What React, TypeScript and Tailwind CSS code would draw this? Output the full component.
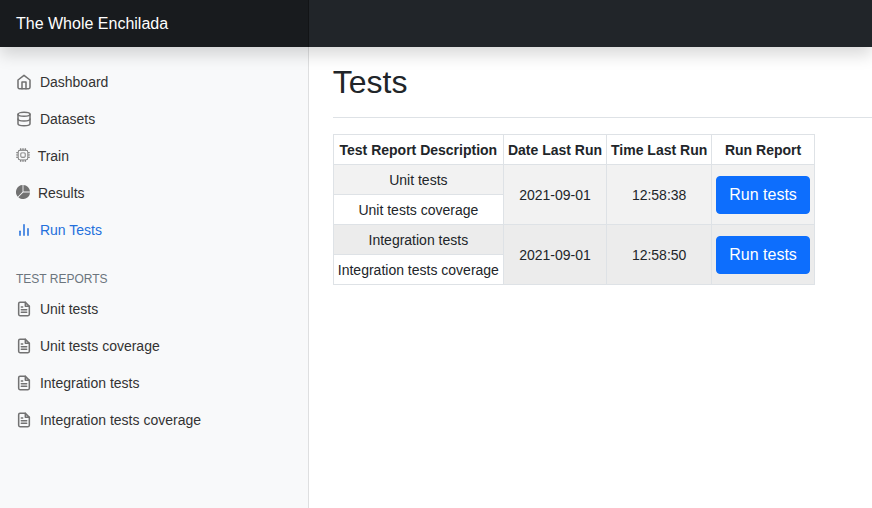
import type { ReactNode } from "react";
import { FiBarChart2, FiDatabase, FiFileText, FiHome } from "react-icons/fi";
import { BsCpu, BsPieChartFill } from "react-icons/bs";

type NavEntry = { label: string; icon: ReactNode; active?: boolean };

const feather = "mr-1 inline-block h-4 w-4 stroke-[2.3] align-text-bottom";
const glyph = "mr-1 inline-block h-[14px] w-[14px] align-[-0.75px]";

const mainLinks: NavEntry[] = [
  { label: "Dashboard", icon: <FiHome className={feather} /> },
  { label: "Datasets", icon: <FiDatabase className={feather} /> },
  { label: "Train", icon: <BsCpu className={glyph} /> },
  { label: "Results", icon: <BsPieChartFill className={glyph} /> },
  { label: "Run Tests", icon: <FiBarChart2 className={feather} />, active: true },
];

const reportLinks: NavEntry[] = [
  "Unit tests",
  "Unit tests coverage",
  "Integration tests",
  "Integration tests coverage",
].map((label) => ({ label, icon: <FiFileText className={feather} /> }));

const reports = [
  { name: "Unit tests", date: "2021-09-01", time: "12:58:38", bg: "bg-[#f2f2f2]" },
  { name: "Integration tests", date: "2021-09-01", time: "12:58:50", bg: "bg-[#ececec]" },
];

const cell = "border border-[#dee2e6] px-1 pt-[5px] pb-[3px]";

function NavList({ items }: { items: NavEntry[] }) {
  return (
    <ul>
      {items.map((item) => (
        <li key={item.label}>
          <a
            className={`block h-[37px] px-4 py-2 font-medium ${
              item.active ? "text-[#2470dc]" : "text-[#333]"
            }`}
          >
            <span className={item.active ? "" : "text-[#727272]"}>{item.icon}</span>{" "}
            {item.label}
          </a>
        </li>
      ))}
    </ul>
  );
}

export default function App() {
  return (
    <div className="flex h-[508px] w-full flex-col overflow-hidden bg-white font-['Liberation_Sans',Arial,sans-serif] text-[14px] leading-[21px] text-[#212529]">
      <header className="z-10 flex h-[47px] shrink-0 bg-[#212529] shadow-[0_8px_16px_rgba(0,0,0,0.15)]">
        <div className="w-[309px] bg-black/25 px-4 pt-3 text-base leading-6 text-white shadow-[inset_-1px_0_0_rgba(0,0,0,0.25)]">
          The Whole Enchilada
        </div>
      </header>
      <div className="flex min-h-0 grow">
        <nav className="w-[309px] shrink-0 bg-[#f8f9fa] pt-[17px] shadow-[inset_-1px_0_0_rgba(0,0,0,0.1)]">
          <NavList items={mainLinks} />
          <h6 className="mt-[23px] mb-[5px] px-4 text-[12px] leading-[14.4px] text-[#6c757d] uppercase">
            Test reports
          </h6>
          <NavList items={reportLinks} />
        </nav>
        <main className="min-w-0 grow pl-[23.8px]">
          <div className="mb-4 border-b border-[#dee2e6] pt-4 pb-2">
            <h1 className="mb-2 text-[32px] leading-[38.4px] font-medium">Tests</h1>
          </div>
          <table className="border-collapse text-center align-middle whitespace-nowrap">
            <thead>
              <tr>
                <th className={cell}>Test Report Description</th>
                <th className={cell}>Date Last Run</th>
                <th className={cell}>Time Last Run</th>
                <th className={cell}>Run Report</th>
              </tr>
            </thead>
            {reports.map((r) => (
              <tbody key={r.name}>
                <tr className={r.bg}>
                  <td className={cell}>{r.name}</td>
                  <td className={cell} rowSpan={2}>{r.date}</td>
                  <td className={cell} rowSpan={2}>{r.time}</td>
                  <td className="border border-[#dee2e6] p-1" rowSpan={2}>
                    <button className="block rounded-[4px] border border-[#0d6efd] bg-[#0d6efd] px-3 py-1.5 text-base leading-6 text-white">
                      Run tests
                    </button>
                  </td>
                </tr>
                <tr>
                  <td className={cell}>{r.name} coverage</td>
                </tr>
              </tbody>
            ))}
          </table>
        </main>
      </div>
    </div>
  );
}
